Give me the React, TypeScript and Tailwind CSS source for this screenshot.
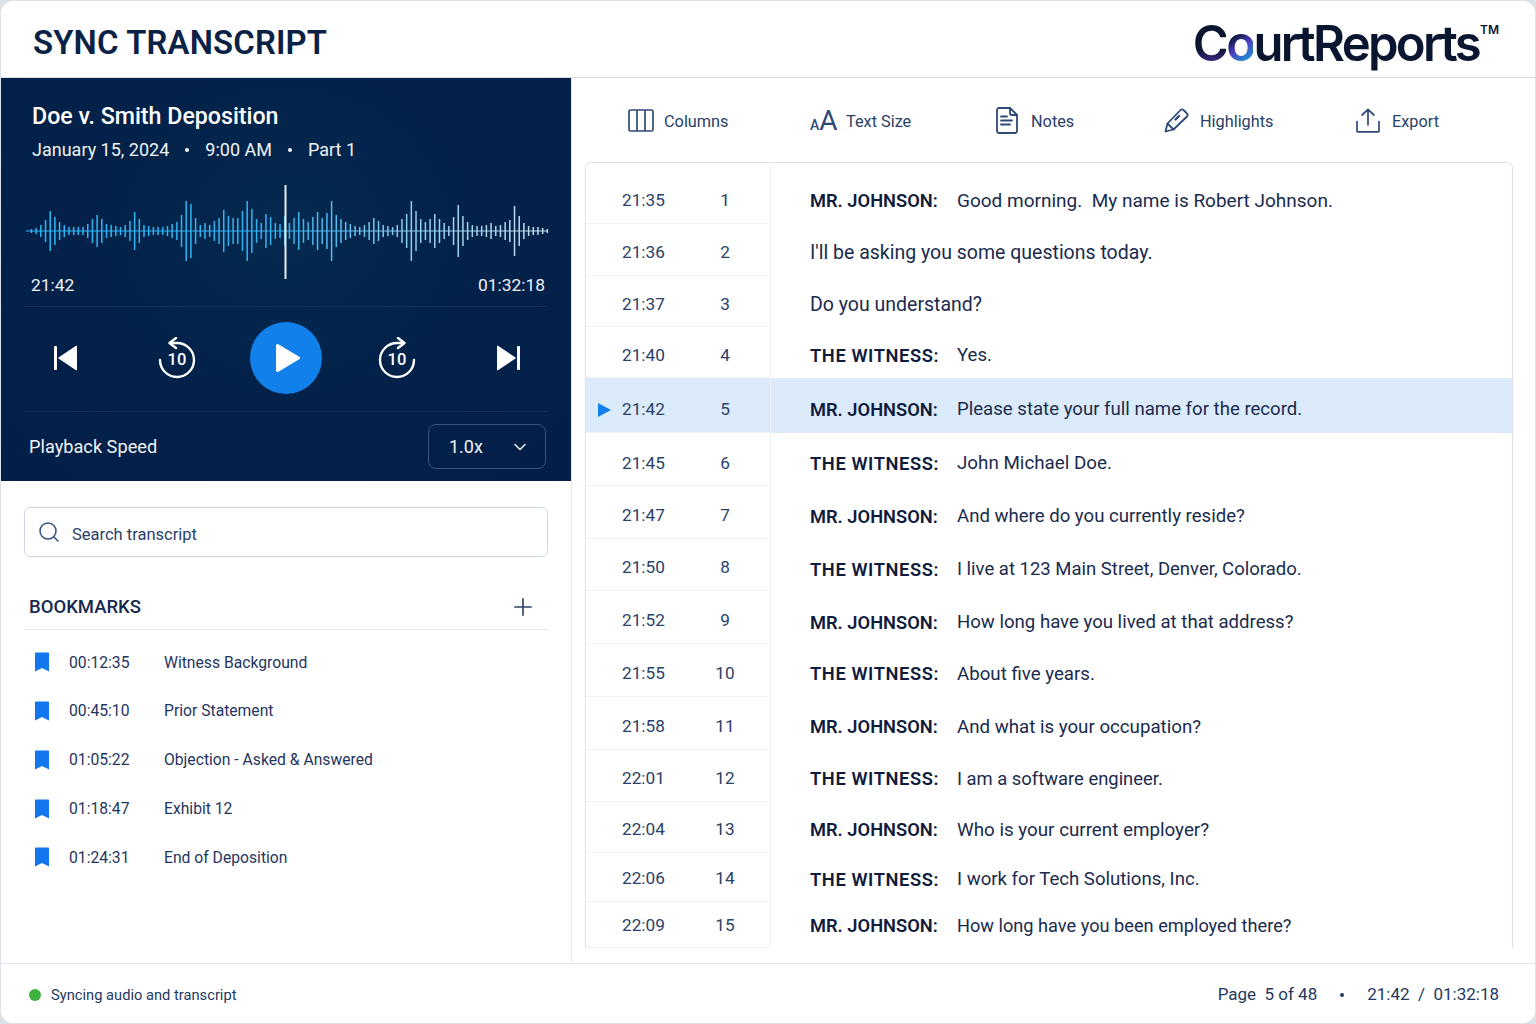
import { ChevronDown, Plus, Search } from "lucide-react";

const wave = [
  2, 3, 6, 11, 20, 14, 9, 6, 4, 4, 4, 4, 7, 12, 16, 12, 7, 6, 5, 4, 6, 10, 19, 12, 6, 5, 4, 4, 4, 5, 7, 9, 16, 30, 27,
  13, 6, 8, 6, 10, 13, 21, 15, 13, 13, 20, 30, 22, 12, 8, 17, 14, 8, 7, 15, 8, 13, 19, 12, 9, 14, 19, 13, 18, 30, 16,
  12, 9, 7, 5, 4, 6, 9, 13, 10, 6, 5, 4, 6, 12, 17, 30, 20, 12, 9, 12, 17, 12, 8, 5, 14, 26, 15, 9, 6, 5, 5, 6, 8, 5,
  6, 9, 11, 25, 15, 8, 5, 4, 4, 3, 2,
];

const rows = [
  { time: "21:35", n: 1, who: "MR. JOHNSON:", text: "Good morning.  My name is Robert Johnson.", h: "h-[61px]", pad: "pt-[15px]", tp: "pt-[15px]", sz: "text-[19px]" },
  { time: "21:36", n: 2, who: "", text: "I'll be asking you some questions today.", h: "h-[52px]", pad: "pt-[7px]", tp: "pt-[5px]", sz: "text-[19.500px]" },
  { time: "21:37", n: 3, who: "", text: "Do you understand?", h: "h-[51px]", pad: "pt-[7px]", tp: "pt-[7px]", sz: "text-[19.500px]" },
  { time: "21:40", n: 4, who: "THE WITNESS:", text: "Yes.", h: "h-[51px]", pad: "pt-[7px]", tp: "pt-[7px]", sz: "text-[18.600px]" },
  { time: "21:42", n: 5, who: "MR. JOHNSON:", text: "Please state your full name for the record.", h: "h-[55px]", pad: "pt-[9px]", tp: "pt-[8px]", sz: "text-[18.600px]" },
  { time: "21:45", n: 6, who: "THE WITNESS:", text: "John Michael Doe.", h: "h-[53px]", pad: "pt-[9px]", tp: "pt-[8px]", sz: "text-[18.800px]" },
  { time: "21:47", n: 7, who: "MR. JOHNSON:", text: "And where do you currently reside?", h: "h-[53px]", pad: "pt-[7px]", tp: "pt-[9px]", sz: "text-[18.600px]" },
  { time: "21:50", n: 8, who: "THE WITNESS:", text: "I live at 123 Main Street, Denver, Colorado.", h: "h-[52px]", pad: "pt-[6px]", tp: "pt-[10px]", sz: "text-[18.500px]" },
  { time: "21:52", n: 9, who: "MR. JOHNSON:", text: "How long have you lived at that address?", h: "h-[53px]", pad: "pt-[7px]", tp: "pt-[11px]", sz: "text-[18.600px]" },
  { time: "21:55", n: 10, who: "THE WITNESS:", text: "About five years.", h: "h-[53px]", pad: "pt-[7px]", tp: "pt-[7px]", sz: "text-[18.700px]" },
  { time: "21:58", n: 11, who: "MR. JOHNSON:", text: "And what is your occupation?", h: "h-[53px]", pad: "pt-[7px]", tp: "pt-[7px]", sz: "text-[18.700px]" },
  { time: "22:01", n: 12, who: "THE WITNESS:", text: "I am a software engineer.", h: "h-[52px]", pad: "pt-[6px]", tp: "pt-[6px]", sz: "text-[18.400px]" },
  { time: "22:04", n: 13, who: "MR. JOHNSON:", text: "Who is your current employer?", h: "h-[51px]", pad: "pt-[5px]", tp: "pt-[5px]", sz: "text-[18.800px]" },
  { time: "22:06", n: 14, who: "THE WITNESS:", text: "I work for Tech Solutions, Inc.", h: "h-[49px]", pad: "pt-[3px]", tp: "pt-[4px]", sz: "text-[18.600px]" },
  { time: "22:09", n: 15, who: "MR. JOHNSON:", text: "How long have you been employed there?", h: "h-[46px]", pad: "pt-[2px]", tp: "pt-[2px]", sz: "text-[18.200px]" },
];

const bookmarks = [
  { time: "00:12:35", label: "Witness Background" },
  { time: "00:45:10", label: "Prior Statement" },
  { time: "01:05:22", label: "Objection - Asked & Answered" },
  { time: "01:18:47", label: "Exhibit 12" },
  { time: "01:24:31", label: "End of Deposition" },
];

function Waveform() {
  return (
    <svg width="570" height="94" viewBox="0 0 570 94" className="block">
      <defs>
        <linearGradient id="bars" gradientUnits="userSpaceOnUse" x1="26" y1="0" x2="547" y2="0">
          <stop offset="0" stopColor="#2db8f5" />
          <stop offset="0.5" stopColor="#35b0ee" />
          <stop offset="0.72" stopColor="#8accee" />
          <stop offset="1" stopColor="#c4deee" />
        </linearGradient>
      </defs>
      <rect x="25" y="45.500" width="522" height="1" fill="url(#bars)" />
      {wave.map((a, i) => (
        <rect key={i} x={29.7 + i * 4.69} y={46 - a} width="1.5" height={a * 2} fill="url(#bars)" />
      ))}
      <rect x="283.500" y="0" width="2" height="94" fill="#e8edf3" />
    </svg>
  );
}

function Replay({ flip }: { flip?: boolean }) {
  return (
    <svg width="40" height="42" viewBox="0 0 40 42" fill="none" stroke="#fff" strokeWidth="2.400" strokeLinecap="round" strokeLinejoin="round">
      <g transform={flip ? "translate(40,0) scale(-1,1)" : undefined}>
        <path d="M2 23a17 17 0 1 0 17-17h-7" />
        <path d="M18 1 11.500 6 18 11" />
      </g>
      <text x={flip ? 21 : 19} y="28" textAnchor="middle" fill="#fff" stroke="none" fontSize="16.500" fontWeight="500" fontFamily="Roboto, sans-serif">
        10
      </text>
    </svg>
  );
}

function BookmarkIcon() {
  return (
    <svg width="16" height="20" viewBox="0 0 16 20" className="shrink-0">
      <path d="M1 1.500C1 .9 1.400.5 2 .5h12c.6 0 1 .4 1 1v18l-7-3.600L1 19.500z" fill="#1277ee" />
    </svg>
  );
}

function Dot() {
  return <span className="mx-[16px] h-[4px] w-[4px] rounded-full bg-[#f0f3f7]" />;
}

function Tool({ label, icon, cls }: { label: string; icon: React.ReactNode; cls: string }) {
  return (
    <div className={`flex items-center text-[16.300px] text-[#2a4168] ${cls}`}>
      {icon}
      <span>{label}</span>
    </div>
  );
}

export default function App() {
  return (
    <div className="h-screen w-full bg-[#dde1e8] p-px font-['Roboto',sans-serif]">
      <div className="flex h-full flex-col overflow-hidden rounded-xl bg-white">
        <header className="flex h-[77px] shrink-0 items-center justify-between border-b border-[#d9dee6] pl-[32px] pr-[36px] pt-[8px]">
          <h1 className="pt-[2px] text-[32.800px] font-semibold tracking-[0.2px] text-[#0b2247]">SYNC TRANSCRIPT</h1>
          <div className="flex items-start font-['Inter',sans-serif] text-[#0a1530]">
            <span className="mt-[1px] text-[49px] font-semibold leading-none tracking-[-2.700px]">
              <span className="bg-[linear-gradient(180deg,#0a1530_60%,#5b2bb5_92%)] bg-clip-text text-transparent">C</span>
              <span className="bg-[linear-gradient(145deg,#0a1530_35%,#4a3cc0_55%,#18a8d8_85%)] bg-clip-text text-transparent">o</span>
              urtReports
            </span>
            <span className="ml-[1px] mt-[6px] text-[12px] font-semibold leading-none">TM</span>
          </div>
        </header>

        <main className="flex min-h-0 flex-1">
          <section className="flex w-[570px] shrink-0 flex-col">
            <div className="flex h-[403px] flex-col bg-[radial-gradient(ellipse_at_50%_38%,#04294f_0%,#032149_50%,#031f47_100%)] text-white">
              <div className="pl-[31px] pt-[22px]">
                <h2 className="text-[23.200px] font-medium leading-[32px]">Doe v. Smith Deposition</h2>
                <div className="mt-[5px] flex items-center text-[18px] leading-[26px] text-[#f0f3f7]">
                  <span>January 15, 2024</span>
                  <Dot />
                  <span>9:00 AM</span>
                  <Dot />
                  <span>Part 1</span>
                </div>
              </div>
              <div className="mt-[22px]">
                <Waveform />
              </div>
              <div className="-mt-[6px] flex justify-between pb-[9px] pl-[30px] pr-[26px] text-[17.400px] leading-[24px] text-[#eef2f6]">
                <span>21:42</span>
                <span>01:32:18</span>
              </div>
              <div className="mx-[23px] flex h-[106px] items-center border-y border-[#10305c] pb-[2px]">
                <div className="flex w-full items-center pl-[29px]">
                  <svg width="26" height="28" viewBox="0 0 26 28" fill="#fff" className="mr-[79px]">
                    <rect x="1" y="2" width="3" height="24" rx="1" />
                    <path d="M24 2.500v23a.8.8 0 0 1-1.300.6L5.500 14.600a.8.8 0 0 1 0-1.200L22.700 1.900A.8.8 0 0 1 24 2.500z" />
                  </svg>
                  <div className="mr-[52px]"><Replay /></div>
                  <div className="mr-[54px] flex h-[72px] w-[72px] items-center justify-center rounded-full bg-[#1280ea]">
                    <svg width="28" height="30" viewBox="0 0 28 30" fill="#fff" className="ml-[3px]">
                      <path d="M2 2.500v25a1.500 1.500 0 0 0 2.300 1.200l21-12.500a1.500 1.500 0 0 0 0-2.400L4.300 1.300A1.500 1.500 0 0 0 2 2.500z" />
                    </svg>
                  </div>
                  <div className="mr-[79px]"><Replay flip /></div>
                  <svg width="26" height="28" viewBox="0 0 26 28" fill="#fff">
                    <rect x="22" y="2" width="3" height="24" rx="1" />
                    <path d="M2 2.500v23a.8.8 0 0 0 1.300.6l17.200-11.500a.8.8 0 0 0 0-1.200L3.300 1.900A.8.8 0 0 0 2 2.500z" />
                  </svg>
                </div>
              </div>
              <div className="flex flex-1 items-center justify-between pl-[28px] pr-[25px]">
                <span className="text-[18.200px] text-[#f0f3f7]">Playback Speed</span>
                <div className="flex h-[45px] w-[118px] items-center justify-between rounded-lg border border-[#37537e] pl-[20px] pr-[15px] text-[18px] text-[#f0f3f7]">
                  <span>1.0x</span>
                  <ChevronDown size={20} strokeWidth={1.800} />
                </div>
              </div>
            </div>

            <div className="flex flex-1 flex-col px-[23px] pt-[26px]">
              <div className="flex h-[50px] items-center rounded-md border border-[#ccd6e5] pl-[12px] text-[16.500px] text-[#2a4168]">
                <Search size={24} strokeWidth={1.500} className="mr-[11px] text-[#31507c]" />
                <span className="pt-[6px]">Search transcript</span>
              </div>
              <div className="mt-[26px] flex h-[47px] items-center justify-between border-b border-[#e2e6ed] pl-[5px] pr-[11px] pt-[1px]">
                <span className="pt-[3px] text-[18.500px] font-medium text-[#16294f]">BOOKMARKS</span>
                <Plus size={28} strokeWidth={1.400} className="text-[#2a4168]" />
              </div>
              <div className="mt-[8px] flex flex-col">
                {bookmarks.map((b) => (
                  <div key={b.time} className="flex h-[48.750px] items-center pl-[10px] text-[15.700px] text-[#1f3560]">
                    <BookmarkIcon />
                    <span className="ml-[19px] w-[95px]">{b.time}</span>
                    <span>{b.label}</span>
                  </div>
                ))}
              </div>
            </div>
          </section>

          <section className="flex min-w-0 flex-1 flex-col border-l border-[#e3e7ee]">
            <div className="flex h-[84px] shrink-0 items-center pl-[56px] pt-[4px]">
              <Tool
                label="Columns"
                cls="w-[182px]"
                icon={
                  <svg width="26" height="23" viewBox="0 0 26 23" fill="none" stroke="#2e4a78" strokeWidth="1.700" className="mb-[3px] mr-[10px]">
                    <rect x="1" y="1" width="24" height="21" rx="1.500" />
                    <path d="M9 1v21M17 1v21" />
                  </svg>
                }
              />
              <Tool
                label="Text Size"
                cls="w-[186px]"
                icon={
                  <span className="mb-[3px] mr-[10px] flex w-[26px] items-baseline font-normal leading-none text-[#2e4a78]">
                    <span className="text-[14px] font-medium">A</span>
                    <span className="text-[28px]">A</span>
                  </span>
                }
              />
              <Tool
                label="Notes"
                cls="w-[168px]"
                icon={
                  <svg width="22" height="27" viewBox="0 0 22 27" fill="none" stroke="#2e4a78" strokeWidth="1.800" strokeLinejoin="round" strokeLinecap="round" className="mb-[3px] mr-[13px]">
                    <path d="M3 1h11l7 7v16a2 2 0 0 1-2 2H3a2 2 0 0 1-2-2V3a2 2 0 0 1 2-2z" />
                    <path d="M14 1v5a2 2 0 0 0 2 2h5M5 9.500h6M5 13.500h11M5 17.500h9" />
                  </svg>
                }
              />
              <Tool
                label="Highlights"
                cls="w-[192px]"
                icon={
                  <svg width="25" height="25" viewBox="0 0 25 25" fill="none" stroke="#2e4a78" strokeWidth="1.800" strokeLinejoin="round" strokeLinecap="round" className="mb-[3px] mr-[11px]">
                    <path d="M1.500 23.500 3.500 15.500 16.500 2a2 2 0 0 1 3 0L23 5.500a2 2 0 0 1 0 3L9.500 21.500z" />
                    <path d="m3.500 15.500 6 6" />
                    <path d="m11.500 11.500 3.500-3.500" strokeWidth="2.400" />
                  </svg>
                }
              />
              <Tool
                label="Export"
                cls=""
                icon={
                  <svg width="24" height="25" viewBox="0 0 24 25" fill="none" stroke="#2e4a78" strokeWidth="1.700" strokeLinecap="round" strokeLinejoin="round" className="mb-[3px] mr-[12px]">
                    <path d="M12 17V1.500M6 7l6-5.500L18 7" />
                    <path d="M1 13.500V23a.8.8 0 0 0 .8.8h20.400a.8.8 0 0 0 .8-.8v-9.500" />
                  </svg>
                }
              />
            </div>

            <div className="ml-[13px] mr-[22px] flex flex-col rounded-t-md border-x border-t border-[#dde3ec]">
              {rows.map((r) => {
                const active = r.n === 5;
                return (
                  <div key={r.n} className={`flex ${r.h} ${active ? "bg-[#dcebfb]" : ""}`}>
                    <div className={`flex w-[185px] shrink-0 items-center border-b border-r border-[#f0f2f6] text-[17.200px] text-[#2a4168] ${r.pad}`}>
                      <span className="flex w-[36px] shrink-0 justify-center">
                        {active && (
                          <svg width="14" height="16" viewBox="0 0 14 16">
                            <path d="M1 1v14l13-7z" fill="#1280ea" />
                          </svg>
                        )}
                      </span>
                      <span className="w-[68px] shrink-0">{r.time}</span>
                      <span className="w-[70px] shrink-0 text-center">{r.n}</span>
                    </div>
                    <div className={`flex flex-1 items-center pl-[39px] ${r.tp}`}>
                      {r.who && (
                        <span className={`w-[147px] shrink-0 text-[18.300px] font-semibold text-[#101c3c] ${r.who === "THE WITNESS:" ? "tracking-[0.6px]" : ""}`}>
                          {r.who}
                        </span>
                      )}
                      <span className={`whitespace-pre text-[#1a2b4e] ${r.sz}`}>{r.text}</span>
                    </div>
                  </div>
                );
              })}
            </div>
          </section>
        </main>

        <footer className="flex h-[60px] shrink-0 items-center justify-between border-t border-[#dfe3ea] pl-[28px] pr-[36px] pt-[3px]">
          <div className="flex items-center text-[14.700px] text-[#24395f]">
            <span className="mr-[10px] h-[12px] w-[12px] rounded-full bg-[#3db33d]" />
            Syncing audio and transcript
          </div>
          <div className="flex items-center whitespace-pre text-[17px] text-[#24395f]">
            <span>Page  5 of 48</span>
            <span className="mx-[23px] h-[4px] w-[4px] rounded-full bg-[#24395f]" />
            <span>21:42  /  01:32:18</span>
          </div>
        </footer>
      </div>
    </div>
  );
}
